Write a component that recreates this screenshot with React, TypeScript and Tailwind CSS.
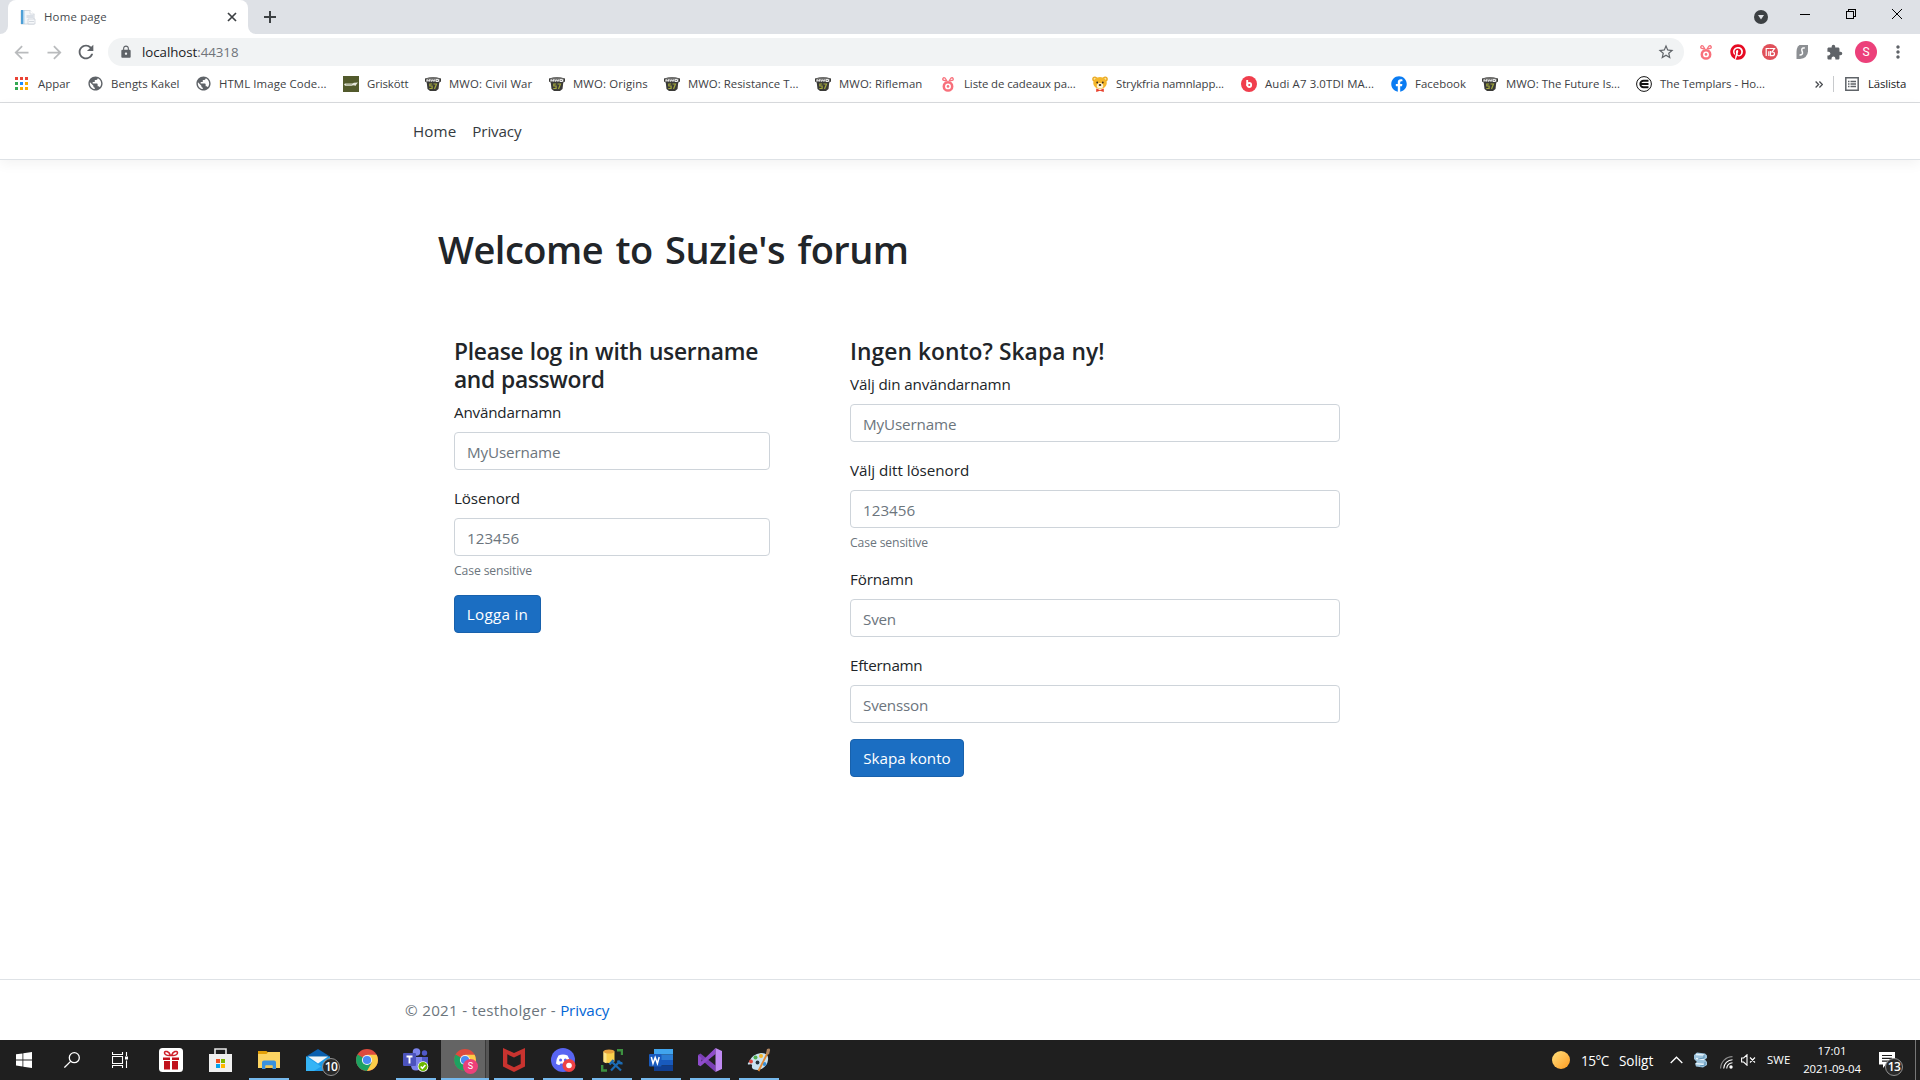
import React from "react";
import { MdArrowBack, MdArrowForward, MdRefresh, MdLock, MdStarBorder, MdExtension, MdMoreVert, MdPublic } from "react-icons/md";
import { FaPinterest, FaFacebook } from "react-icons/fa";

/* ---------- browser icons ---------- */

const PageIcon = () => (
  <svg width="16" height="16" viewBox="0 0 16 16">
    <path d="M1 1.500h9l4 3.500V15H1z" fill="#f4f6f8" stroke="#d3d8de" strokeWidth="1" />
    <rect x="1" y="1" width="3" height="14" fill="#4d9fd6" />
    <rect x="3" y="1" width="1.500" height="14" fill="#a9d0ec" />
    <path d="M10 1v4h4.500" fill="#fff" stroke="#d3d8de" strokeWidth=".8" />
    <rect x="6.500" y="6" width="7" height="3" fill="#dbe0e7" />
    <path d="M8 10h7v5H8z" fill="#f6f8fa" stroke="#c5cbd4" strokeWidth=".7" />
    <path d="M9 12.500h5" stroke="#d3d8de" />
  </svg>
);

const AppsIcon = () => (
  <svg width="16" height="16" viewBox="0 0 16 16">
    <path d="M1 1h3v3H1zM6 1h3v3H6zM11 1h3v3h-3z" fill="#ea4335" />
    <path d="M1 6h3v3H1zM1 11h3v3H1z" fill="#34a853" />
    <path d="M6 6h3v3H6z" fill="#1a8cff" />
    <path d="M11 6h3v3h-3zM6 11h3v3H6zM11 11h3v3h-3z" fill="#f9ab00" />
  </svg>
);

const Globe = () => <MdPublic size={17} className="-ml-[0.5px] shrink-0 text-[#5f6368]" />;

const Pig = () => (
  <svg width="16" height="16" viewBox="0 0 16 16">
    <rect width="16" height="16" fill="#525a2c" />
    <path d="M1 8.300l1-.8h7.500l1.500-.8 4-.2-1.500 1.700-.8 1.600h-1l-.4-.6-2 .2-.5.300H2z" fill="#e4e6da" />
    <path d="M3 8.300h6" stroke="#858b68" strokeWidth=".6" />
  </svg>
);

const Mwo = () => (
  <svg width="16" height="16" viewBox="0 0 16 16">
    <path d="M0 2.500Q8-.2 16 2.500v3l-1.700 1-.8 6.500-2.500 2H5l-2.500-2-.8-6.500L0 5.500z" fill="#3a3a38" />
    <path d="M1 2.600Q8 .5 15 2.600v3.200H1z" fill="#6f6f6d" />
    <path d="M2 5.500V3.600l1.300 1.200 1.300-1.200v1.900M5.800 3.400l.7 2 1.200-1.700 1.200 1.700.9-2M11 3.600h2.500v1.900H11z" fill="none" stroke="#f0f0f0" strokeWidth="1" />
    <path d="M7.200 8H4.800v2h2.300v2.500H4.300M8.500 8h3l-2 5" fill="none" stroke="#a3a83c" strokeWidth="1.200" />
  </svg>
);

const Bunny = ({ size = 16 }: { size?: number }) => (
  <svg width={size} height={size} viewBox="0 0 16 16" fill="none" stroke="#f8707b">
    <circle cx="8" cy="10.400" r="4.200" strokeWidth="2.500" />
    <circle cx="8" cy="10.400" r="1.300" fill="#f8707b" stroke="none" />
    <path d="M6.500 5.200L3.300 4.200a1.300 1.300 0 1 1 1.600-2.200L7 5M9.500 5.200l3.200-1a1.300 1.300 0 1 0-1.600-2.200L9 5" strokeWidth="1.300" />
  </svg>
);

const Bear = () => (
  <svg width="16" height="16" viewBox="0 0 16 16">
    <circle cx="2.800" cy="3" r="2.600" fill="#e9a820" />
    <circle cx="13.200" cy="3" r="2.600" fill="#e9a820" />
    <circle cx="2.800" cy="3" r="1.200" fill="#fbe3a0" />
    <circle cx="13.200" cy="3" r="1.200" fill="#fbe3a0" />
    <ellipse cx="8" cy="7" rx="6.800" ry="6" fill="#f4b62a" />
    <ellipse cx="8" cy="9.800" rx="3.200" ry="2.700" fill="#fdf3d6" />
    <circle cx="5.200" cy="6.500" r=".9" fill="#3b2a16" />
    <circle cx="10.800" cy="6.500" r=".9" fill="#3b2a16" />
    <ellipse cx="8" cy="9" rx="1.300" ry=".9" fill="#3b2a16" />
    <path d="M4.200 12.500L8 14l3.800-1.500V16L8 14.800 4.200 16z" fill="#e8402c" />
  </svg>
);

const Blocket = () => (
  <svg width="16" height="16" viewBox="0 0 16 16">
    <circle cx="8" cy="8" r="8" fill="#f03e4d" />
    <path d="M6.200 4v5.800" stroke="#fff" strokeWidth="1.900" />
    <circle cx="8.200" cy="9" r="2" fill="none" stroke="#fff" strokeWidth="1.800" />
  </svg>
);

const Facebook = () => (
  <span className="grid h-4 w-4 place-items-center rounded-full bg-white text-[#0b7cf2]">
    <FaFacebook size={16} />
  </span>
);

const Templar = () => (
  <svg width="16" height="16" viewBox="0 0 16 16" fill="none" stroke="#111">
    <circle cx="8" cy="8" r="7.400" strokeWidth="1" />
    <path d="M12.500 4.800H7.500a3.200 3.200 0 0 0 0 6.400h5M4.500 8h8" strokeWidth="1.900" />
  </svg>
);

type Bookmark = [React.ReactNode, string, string, string];

const bookmarks: Bookmark[] = [
  [<AppsIcon />, "Appar", "w-[73px]", "tracking-normal"],
  [<Globe />, "Bengts Kakel", "w-[108px]", "tracking-[0.05px]"],
  [<Globe />, "HTML Image Code...", "w-[148px]", "tracking-[0.1px]"],
  [<Pig />, "Griskött", "w-[82px]", "tracking-[-0.1px]"],
  [<Mwo />, "MWO: Civil War", "w-[124px]", "tracking-[0.13px]"],
  [<Mwo />, "MWO: Origins", "w-[115px]", "tracking-[0.12px]"],
  [<Mwo />, "MWO: Resistance T...", "w-[151px]", "tracking-[0.02px]"],
  [<Mwo />, "MWO: Rifleman", "w-[125px]", "tracking-[0.07px]"],
  [<Bunny />, "Liste de cadeaux pa...", "w-[152px]", "tracking-[-0.09px]"],
  [<Bear />, "Strykfria namnlapp...", "w-[149px]", "tracking-[-0.11px]"],
  [<Blocket />, "Audi A7 3.0TDI MA...", "w-[150px]", "tracking-[0.12px]"],
  [<Facebook />, "Facebook", "w-[91px]", "tracking-[0.04px]"],
  [<Mwo />, "MWO: The Future Is...", "w-[154px]", "tracking-[0.02px]"],
  [<Templar />, "The Templars - Ho...", "w-[140px]", "tracking-[-0.05px]"],
];

function TabStrip() {
  return (
    <div className="flex h-[34px] bg-[#dee1e6]">
      <div className="flex w-2 items-end bg-white">
        <div className="h-full w-full rounded-br-lg bg-[#dee1e6]" />
      </div>
      <div className="flex w-60 items-center rounded-t-lg bg-white pl-3 pr-[11px]">
        <PageIcon />
        <span className="ml-2 text-[11.4px] tracking-[0.2px] text-[#45494d]">Home page</span>
        <svg className="ml-auto" width="10" height="10" viewBox="0 0 10 10" stroke="#3c4043" strokeWidth="1.700">
          <path d="M1 1l8 8M9 1L1 9" />
        </svg>
      </div>
      <div className="w-2 bg-white">
        <div className="h-full w-full rounded-bl-lg bg-[#dee1e6]" />
      </div>
      <svg className="ml-2 mt-[11px]" width="12" height="12" viewBox="0 0 12 12" stroke="#3c4043" strokeWidth="2">
        <path d="M6 0v12M0 6h12" />
      </svg>
      <svg className="ml-auto mt-[10px]" width="14" height="14" viewBox="0 0 14 14">
        <circle cx="7" cy="7" r="7" fill="#3c4043" />
        <path d="M4 5h6L7 9.500z" fill="#dee1e6" />
      </svg>
      <svg className="ml-8 mt-[9px]" width="10" height="10" stroke="#000" shapeRendering="crispEdges">
        <path d="M0 5.500h10" />
      </svg>
      <svg className="ml-9 mt-[9px]" width="10" height="10" viewBox="0 0 10 10" stroke="#000" fill="none" shapeRendering="crispEdges">
        <path d="M.5 2.500h7v7h-7zM2.500 2.500v-2h7v7h-2" />
      </svg>
      <svg className="ml-9 mr-[18px] mt-[9px]" width="10" height="10" viewBox="0 0 10 10" stroke="#000">
        <path d="M0 0l10 10M10 0L0 10" />
      </svg>
    </div>
  );
}

function Toolbar() {
  return (
    <div className="flex h-9 items-center bg-white text-[#5f6368]">
      <MdArrowBack size={21} className="ml-[11px] text-[#b9bbbd]" />
      <MdArrowForward size={21} className="ml-3 text-[#b9bbbd]" />
      <MdRefresh size={22} className="ml-[10px]" />
      <div className="ml-[11px] flex h-7 w-[1576px] items-center rounded-full bg-[#f1f3f4] pl-[11px] pr-[9px]">
        <MdLock size={14} />
        <span className="ml-[9px] pt-0.5 text-[13.3px] tracking-[-0.05px] text-[#202124]">
          localhost<span className="text-[#70747a]">:44318</span>
        </span>
        <MdStarBorder size={18} className="ml-auto" />
      </div>
      <span className="ml-3.5 w-8"><Bunny /></span>
      <span className="w-8"><FaPinterest size={16} className="text-[#e60b23]" /></span>
      <span className="w-8">
        <svg width="16" height="16" viewBox="0 0 16 16">
          <circle cx="8" cy="8" r="8" fill="#e0505a" />
          <path d="M4.200 12V4.500h3.600M6.800 12V7.300M8 4.500h4.500L10 8q2.500 0 2.500 1.700 0 2-2.300 2H8.500V7" fill="none" stroke="#fff" strokeWidth="1.200" />
        </svg>
      </span>
      <span className="w-8">
        <svg width="16" height="16" viewBox="0 0 16 16">
          <path d="M5.500 1H14v6.500Q13.500 14 6 15H2.500V8q0-5 3-7z" fill="#8c8f93" />
          <path d="M10.800 4Q7.800 3.500 7.800 5.800q0 1.200.6 2.200.8 3.200-2.900 3" fill="none" stroke="#fff" strokeWidth="1.500" />
        </svg>
      </span>
      <MdExtension size={17} />
      <span className="ml-3 grid h-[22px] w-[22px] place-items-center rounded-full bg-[#ec407a] font-['Roboto'] text-xs text-white">S</span>
      <MdMoreVert size={20} className="ml-[11px]" />
    </div>
  );
}

function BookmarkBar() {
  return (
    <div className="flex h-[33px] items-center border-b border-[#d9dbde] bg-white pb-1 pl-3.5 text-[11.4px] text-[#3c4043]">
      {bookmarks.map(([icon, label, width, tracking]) => (
        <div key={label} className={`flex shrink-0 items-center gap-2 ${width}`}>
          <span className="flex h-4 w-4 shrink-0 items-center">{icon}</span>
          <span className={`whitespace-nowrap ${tracking}`}>{label}</span>
        </div>
      ))}
      <svg className="ml-[39px]" width="8" height="7" viewBox="0 0 8 7" fill="none" stroke="#4a4d51" strokeWidth="1.300">
        <path d="M.6.500l3 3-3 3M4.400.500l3 3-3 3" />
      </svg>
      <span className="ml-[10px] h-4 w-px bg-[#c8cacd]" />
      <svg className="ml-[11px]" width="14" height="14" viewBox="0 0 14 14" fill="none" stroke="#5f6368">
        <path d="M.8.800h12.400v12.400H.8z" strokeWidth="1.500" />
        <path d="M3 4.500h1.500M5.500 4.500H11M3 7h1.500M5.500 7H11M3 9.500h1.500M5.500 9.500H11" strokeWidth="1.300" />
      </svg>
      <span className="ml-[9px] tracking-[-0.13px] text-[#202124]">Läslista</span>
    </div>
  );
}

/* ---------- page ---------- */

function Field({ label, placeholder, hint, tracking, hold }: { label: string; placeholder: string; hint?: string; tracking: string; hold: string }) {
  return (
    <div className="mb-4">
      <label className={`mb-2 block h-6 leading-6 ${tracking}`}>{label}</label>
      <input
        className={`block h-[38px] w-full rounded border border-[#ced4da] px-3 pt-px placeholder:text-[#6c757d] placeholder:opacity-100 ${hold}`}
        placeholder={placeholder}
      />
      {hint && <small className="mt-1 block h-[19px] pt-px text-[12.2px] leading-[19px] tracking-[-0.12px] text-[#6c757d]">{hint}</small>}
    </div>
  );
}

function Button({ children, className }: { children: React.ReactNode; className: string }) {
  return (
    <button className={`h-[38px] rounded border border-[#1861ac] bg-[#1b6ec2] pt-px text-white ${className}`}>{children}</button>
  );
}

function Page() {
  return (
    <div className="flex h-[937px] flex-col bg-white text-[15.2px] text-[#212529]">
      <nav className="flex h-[57px] items-center gap-4 border-b border-[#dee2e6] pl-[413px] text-[#343a40] shadow-[0_4px_12px_rgba(0,0,0,0.05)]">
        <span className="tracking-[0.1px]">Home</span>
        <span className="tracking-[-0.14px]">Privacy</span>
      </nav>
      <main className="grow pl-[438px] pt-[65px]">
        <h1 className="text-[38px] font-semibold leading-[48px] tracking-[-0.5px] [word-spacing:3px]">Welcome to Suzie's forum</h1>
        <div className="mt-[62px] flex pl-4">
          <form className="w-[316px]">
            <h3 className="mb-2 h-[57px] whitespace-nowrap pt-[3px] text-[22.8px] font-semibold leading-[28px] tracking-[-0.25px] [word-spacing:0.7px]">
              Please log in with username
              <br />
              <span className="tracking-[-0.35px]">and password</span>
            </h3>
            <Field label="Användarnamn" placeholder="MyUsername" tracking="tracking-[-0.18px]" hold="tracking-[-0.12px]" />
            <Field label="Lösenord" placeholder="123456" hint="Case sensitive" tracking="tracking-[-0.1px]" hold="tracking-[0.02px]" />
            <Button className="w-[87px] tracking-[0.3px]">Logga in</Button>
          </form>
          <form className="ml-20 w-[490px]">
            <h3 className="mb-2 h-[29px] pt-[3px] text-[22.8px] font-semibold leading-[28px] tracking-[0.05px]">Ingen konto? Skapa ny!</h3>
            <Field label="Välj din användarnamn" placeholder="MyUsername" tracking="tracking-[-0.14px]" hold="tracking-[-0.12px]" />
            <Field label="Välj ditt lösenord" placeholder="123456" hint="Case sensitive" tracking="tracking-[-0.03px]" hold="tracking-[0.02px]" />
            <Field label="Förnamn" placeholder="Sven" tracking="tracking-[-0.17px]" hold="tracking-[-0.2px]" />
            <Field label="Efternamn" placeholder="Svensson" tracking="tracking-[-0.27px]" hold="tracking-[-0.2px]" />
            <Button className="w-[114px]">Skapa konto</Button>
          </form>
        </div>
      </main>
      <footer className="h-[61px] border-t border-[#dee2e6] pl-[405px] leading-[60px] text-[#6c757d]">
        <span className="tracking-[0.29px]">© 2021 - testholger - </span>
        <span className="tracking-[-0.14px] text-[#0366d6]">Privacy</span>
      </footer>
    </div>
  );
}

/* ---------- taskbar icons ---------- */

const WindowsLogo = () => (
  <svg width="16" height="16" viewBox="0 0 16 16" fill="#fff">
    <path d="M0 2.300L6.500 1.400v6.100H0zM7.300 1.300L16 0v7.500H7.300zM0 8.400h6.500v6.100L0 13.600zM7.300 8.400H16V16l-8.700-1.300z" />
  </svg>
);

const Search = () => (
  <svg width="16" height="16" viewBox="0 0 16 16" fill="none" stroke="#fff" strokeWidth="1.300">
    <circle cx="10.300" cy="5.700" r="5" />
    <path d="M6.600 9.400L.4 15.600" />
  </svg>
);

const TaskView = () => (
  <svg width="16" height="16" viewBox="0 0 16 16" fill="none" stroke="#fff" strokeWidth="1.100">
    <path d="M.5 0v2.500h10V0M.5 16v-2.500h10V16M.5 4.500h10v7H.5zM14.500 0v4M14.500 8.500V16" />
    <path d="M13 4.500h3v3h-3z" fill="#fff" stroke="none" />
  </svg>
);

const Gift = () => (
  <svg width="24" height="24" viewBox="0 0 24 24">
    <rect width="24" height="24" rx="3.500" fill="#fff" />
    <path d="M4 9.500h7V12H4zM13 9.500h7V12h-7zM5 13h6v8.500H5zM13 13h6v8.500h-6z" fill="#c1121c" />
    <path d="M11.500 7.500C8 8 5 6.500 5.500 4.500S10 3 11.500 7.500zM12.500 7.500C16 8 19 6.500 18.500 4.500S14 3 12.500 7.500z" fill="none" stroke="#d0202a" strokeWidth="1.500" />
  </svg>
);

const Store = () => (
  <svg width="23" height="24" viewBox="0 0 23 24">
    <path d="M6 7V1h11v6" fill="none" stroke="#e8e8e8" strokeWidth="1.600" />
    <path d="M0 6h23v18H0z" fill="#f0f0f0" />
    <path d="M7 11h4v4H7z" fill="#f25022" />
    <path d="M12 11h4v4h-4z" fill="#7fba00" />
    <path d="M7 16h4v4H7z" fill="#00a4ef" />
    <path d="M12 16h4v4h-4z" fill="#ffb900" />
  </svg>
);

const Explorer = () => (
  <svg width="22" height="20" viewBox="0 0 22 20">
    <path d="M0 2h22v16H0z" fill="#fcd462" />
    <path d="M0 1h8.500l1.500 1.500L8.500 4H0z" fill="#e3a008" />
    <path d="M4 19v-6.500q0-2 2-2h10q2 0 2 2V19h-3.500v-3.500h-7V19z" fill="#3a92dd" />
    <path d="M7.500 15.500h7V18h-7z" fill="#f3c64f" />
  </svg>
);

const Mail = () => (
  <svg width="24" height="22" viewBox="0 0 24 22">
    <path d="M0 7.500L12 0l12 7.500z" fill="#0a5fae" />
    <path d="M0 7.500h24V22H0z" fill="#1d9be9" />
    <path d="M0 7.500L15 17.500 8 22H0z" fill="#35b4f5" />
    <path d="M2 7.500h20L12 14.500z" fill="#f1f5f8" />
  </svg>
);

const Chrome = () => (
  <svg width="22" height="22" viewBox="0 0 22 22">
    <circle cx="11" cy="11" r="11" fill="#dd4b3e" />
    <path d="M11 11L1.500 5.500A11 11 0 0 0 11 22l4.800-8.300z" fill="#1da261" />
    <path d="M11 22a11 11 0 0 0 9.600-16.300H11l4.800 8z" fill="#fccd48" />
    <circle cx="11" cy="11" r="5.100" fill="#f3f3f3" />
    <circle cx="11" cy="11" r="4.100" fill="#4a8af4" />
  </svg>
);

const Teams = () => (
  <svg width="26" height="24" viewBox="0 0 26 24">
    <circle cx="13.500" cy="4" r="3.800" fill="#7b83eb" />
    <circle cx="21.500" cy="5" r="2.700" fill="#5059c9" />
    <path d="M17 9h8v7q-1 5-6 5z" fill="#5059c9" />
    <path d="M8 9h11v7.500q-1 6-6 6T8 17z" fill="#7b83eb" />
    <rect y="5" width="13" height="13" rx="1" fill="#4b53bc" />
    <path d="M3.500 8.500h6M6.500 8.500v7" stroke="#fff" strokeWidth="1.900" />
    <circle cx="20" cy="18.500" r="5.300" fill="#fff" />
    <circle cx="20" cy="18.500" r="4.500" fill="#6bb700" />
    <path d="M17.700 18.500l1.700 1.800 3-3.300" fill="none" stroke="#fff" strokeWidth="1.500" />
  </svg>
);

const McAfee = () => (
  <svg width="22" height="24" viewBox="0 0 22 24">
    <path d="M0 0l11 5L22 0v18.500L11 24 0 18.500z" fill="#c8332f" />
    <path d="M4.300 6.300L11 9.500l6.700-3.200V16L11 19.300 4.300 16z" fill="#1f1f1f" />
  </svg>
);

const Discord = () => (
  <svg width="25" height="24" viewBox="0 0 25 24">
    <circle cx="12" cy="12" r="12" fill="#5865f2" />
    <path d="M7.500 7.500q4.500-2 9 0 2.500 3.500 2.500 8-2 1.500-3.500 1.500l-1-1.500h-5l-1 1.500Q7 17 5 15.500q0-4.500 2.500-8z" fill="#fff" />
    <circle cx="9.600" cy="12" r="1.500" fill="#5865f2" />
    <circle cx="14.400" cy="12" r="1.500" fill="#5865f2" />
    <circle cx="18" cy="17.500" r="6.500" fill="#ed4245" />
    <circle cx="18" cy="17.500" r="2.800" fill="#fff" />
  </svg>
);

const Database = () => (
  <svg width="22" height="23" viewBox="0 0 22 23">
    <path d="M16 1.200h5V6M1.200 16v5.500H6" fill="none" stroke="#3d9140" strokeWidth="2.400" />
    <path d="M2.500 2.500v10q5.500 3 11 0v-10z" fill="#fbd04c" />
    <path d="M2.500 2.500v10.500q1.500 1 3 1.200V2.500z" fill="#fde48a" />
    <ellipse cx="8" cy="2.500" rx="5.500" ry="2" fill="#e8a23d" />
    <path d="M10 21.500L19 12M11 13l9 8.500" stroke="#1b6bb3" strokeWidth="2.200" />
    <path d="M8.500 15.500L12.500 11M17 11.500q1 3.500 4.500 2.500" fill="none" stroke="#1b6bb3" strokeWidth="2.400" />
  </svg>
);

const Word = () => (
  <svg width="24" height="22" viewBox="0 0 24 22">
    <path d="M5 0h19v5.500H5z" fill="#41a5ee" />
    <path d="M5 5.500h19V11H5z" fill="#2b7cd3" />
    <path d="M5 11h19v5.500H5z" fill="#185abd" />
    <path d="M5 16.500h19V22H5z" fill="#103f91" />
    <rect y="5" width="12.500" height="12.500" rx="1" fill="#185abd" />
    <path d="M2.300 8l1.700 6.500L6.200 8.500 8.400 14.500 10.200 8" fill="none" stroke="#fff" strokeWidth="1.500" />
  </svg>
);

const VisualStudio = () => (
  <svg width="24" height="24" viewBox="0 0 24 24">
    <path d="M0 7l2.500-1.500L17.500 17.500V24L2 10.500z" fill="#7b3fb5" />
    <path d="M0 7v10l2.500 1.300L17.500 6V0L3.500 13.500V10z" fill="#8f4ccb" />
    <path d="M17.500 0L24 3v18l-6.500 3z" fill="#c08af2" />
  </svg>
);

const Paint = () => (
  <svg width="24" height="24" viewBox="0 0 24 24">
    <path d="M2 14Q5 6 14 5q8 0 7 7-1 8-10 10-7 0-6-4 .5-2.500-3-1.500Q-.5 16.500 2 14z" fill="#c9e3f1" />
    <circle cx="4" cy="13.500" r="1.900" fill="#e2493d" />
    <circle cx="8.500" cy="9.500" r="2" fill="#4fae4e" />
    <circle cx="14" cy="8" r="2" fill="#f3b52b" />
    <circle cx="10.500" cy="14.500" r="1.900" fill="#27343b" />
    <circle cx="17.500" cy="16" r="1.900" fill="#3a8fd6" />
    <path d="M20.500 5L11.500 23" stroke="#e08a35" strokeWidth="1.900" />
    <path d="M19 5.500L20 1q3.500-1.500 3 1.500L22 6.500z" fill="#b08560" />
  </svg>
);

function CountBadge({ value }: { value: string }) {
  return (
    <span className="grid h-[18px] w-[18px] place-items-center rounded-full border border-[#909090] bg-[#2a2a2a] pb-px text-xs font-semibold leading-none tracking-[-0.7px] text-white">
      {value}
    </span>
  );
}

function Task({ icon, open }: { icon: React.ReactNode; open?: boolean }) {
  return (
    <div className="relative flex w-[49px] items-center justify-center pr-px">
      {icon}
      {open && <span className="absolute bottom-0 left-1 h-0.5 w-10 bg-[#76b9ed]" />}
    </div>
  );
}

function Taskbar() {
  return (
    <div className="flex h-10 bg-[#1f1f1f] text-white">
      <div className="flex w-12 items-center justify-center"><WindowsLogo /></div>
      <div className="flex w-12 items-center justify-center"><Search /></div>
      <div className="flex w-12 items-center justify-center"><TaskView /></div>
      <div className="w-[3px]" />
      <Task icon={<Gift />} />
      <Task icon={<Store />} />
      <Task icon={<Explorer />} open />
      <div className="relative flex w-[49px] items-center justify-center pr-px">
        <Mail />
        <span className="absolute left-[28px] top-[18px]"><CountBadge value="10" /></span>
      </div>
      <Task icon={<Chrome />} />
      <Task icon={<Teams />} open />
      <div className="relative mr-px flex w-12 border-b-2 border-[#76b9ed] bg-[#555]">
        <div className="flex w-11 items-center justify-center bg-[#646464] pl-1 pt-0.5"><Chrome /></div>
        <span className="w-px bg-[#3a3a3a]" />
        <span className="absolute left-[22px] top-[19px] grid h-[15px] w-[15px] place-items-center rounded-full bg-[#ec407a] font-['Roboto'] text-[9px] leading-none">S</span>
      </div>
      <Task icon={<McAfee />} open />
      <Task icon={<Discord />} open />
      <Task icon={<Database />} open />
      <Task icon={<Word />} open />
      <Task icon={<VisualStudio />} open />
      <Task icon={<Paint />} open />

      <div className="ml-auto flex items-center">
        <span className="h-[18px] w-[18px] rounded-full bg-linear-to-br from-[#ffe07a] to-[#ff9a0b]" />
        <span className="ml-[11px] w-[38px] pt-0.5 text-[13.6px] tracking-[-0.5px]">15°C</span>
        <span className="w-[51px] pt-0.5 text-[13.6px] tracking-[-0.1px]">Soligt</span>
        <svg width="13" height="8" viewBox="0 0 13 8" fill="none" stroke="#fff" strokeWidth="1.300">
          <path d="M.7 7l5.800-5.800L12.300 7" />
        </svg>
        <svg className="ml-[10px]" width="15" height="16" viewBox="0 0 15 16">
          <path d="M1 3l3-2.500 8 1 2 2V6l-2 1.500 2 2.500v3l-4 2.500-7-1-1-3 2-1.500L1 7z" fill="#9cc3dc" />
          <path d="M3 2.500l8 .5M3 6.500l8 1M3 11.500l8 1" stroke="#e6f3fa" strokeWidth="1.500" />
          <path d="M11 3v3l-6 1M12 10v3l-5 1" fill="none" stroke="#5c93b8" />
        </svg>
        <svg className="ml-3 mt-1" width="13" height="13" viewBox="0 0 13 13" fill="none" stroke="#fff" strokeWidth="1.100">
          <path d="M.6 12.500A12 12 0 0 1 12.500.6" stroke="#8d8d8d" />
          <path d="M3.700 12.500a9 9 0 0 1 8.800-8.800M6.700 12.500a6 6 0 0 1 5.800-5.800" />
          <circle cx="11" cy="11" r="1.700" fill="#fff" stroke="none" />
        </svg>
        <svg className="ml-2" width="15" height="12" viewBox="0 0 15 12" fill="none" stroke="#fff" strokeWidth="1.100">
          <path d="M.6 4v4h2l3.400 3.200V.8L2.600 4zM9 3.500l5 5M14 3.500l-5 5" />
        </svg>
        <span className="ml-[11px] w-[36px] text-[11.4px] tracking-[0.12px]">SWE</span>
        <span className="flex w-[58px] flex-col items-center whitespace-nowrap text-[11.4px] leading-[18px]">
          <span>17:01</span>
          <span className="tracking-[-0.2px]">2021-09-04</span>
        </span>
        <span className="relative ml-[18px] w-4">
          <svg width="16" height="16" viewBox="0 0 16 16">
            <path d="M0 0h16v12.500H7L4 16v-3.500H0z" fill="#fff" />
            <path d="M3 3.500h10M3 6.300h10M3 9.100h10" stroke="#1f1f1f" strokeWidth="1.200" />
          </svg>
          <span className="absolute left-[6px] top-[6px]"><CountBadge value="13" /></span>
        </span>
        <span className="ml-5 mr-1 h-10 w-px bg-[#777]" />
      </div>
    </div>
  );
}

export default function App() {
  return (
    <div className="h-[1080px] w-[1920px] overflow-hidden bg-white font-['Open_Sans','Noto_Sans',sans-serif]">
      <TabStrip />
      <Toolbar />
      <BookmarkBar />
      <Page />
      <Taskbar />
    </div>
  );
}
